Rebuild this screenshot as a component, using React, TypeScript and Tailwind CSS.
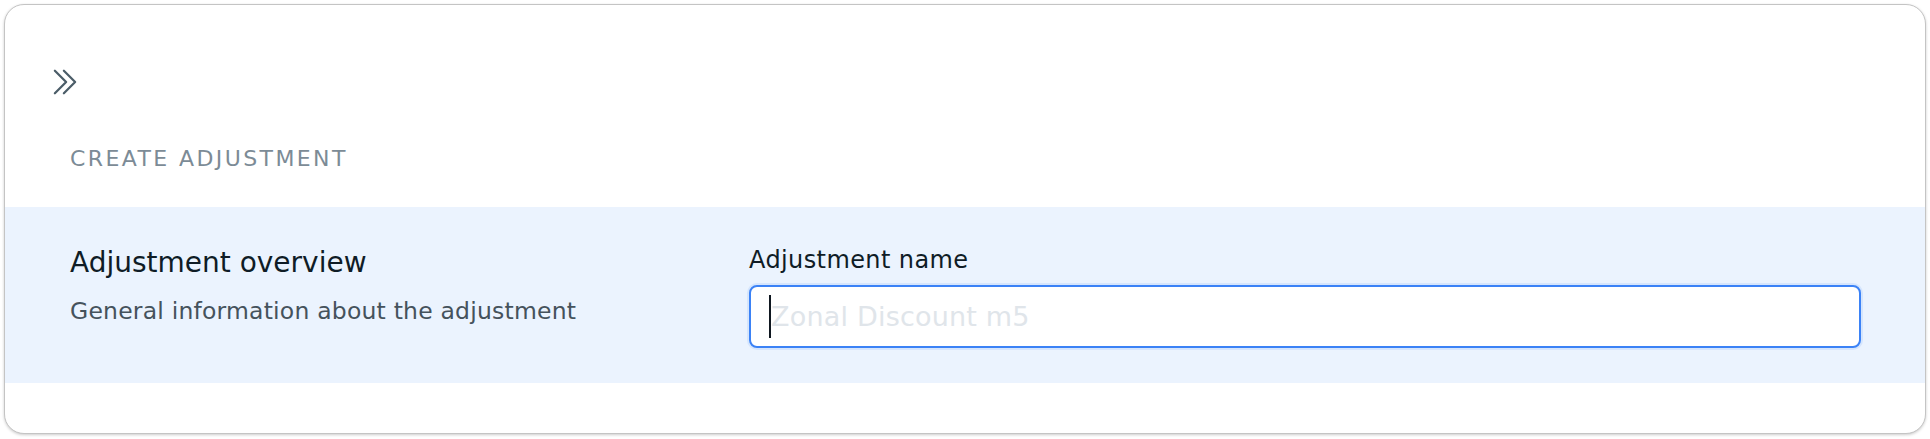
const font = { fontFamily: '"DejaVu Sans", "Liberation Sans", sans-serif' }

function ChevronDoubleRight() {
    return (
        <svg viewBox="0 0 24 24" fill="none" stroke="currentColor" strokeWidth={1.5} className="w-9 h-9 text-[#4b5d68]">
            <path strokeLinecap="round" strokeLinejoin="round" d="m5.25 4.5 7.5 7.5-7.5 7.5m6-15 7.5 7.5-7.5 7.5" />
        </svg>
    )
}

export default function App() {
    return (
        <div className="w-full bg-white p-1" style={font}>
            <div className="rounded-[20px] border border-[#c4c4c4] bg-white shadow-[0_1px_3px_rgba(0,0,0,0.2)] pb-[50px]">
                {/* Header */}
                <div className="pt-[59px] pl-[42px]">
                    <button className="block w-9 h-9">
                        <ChevronDoubleRight />
                    </button>
                </div>
                <h1 className="mt-[46px] pl-[65px] text-[22px] leading-[26px] tracking-[2.4px] text-[#7c8b96] uppercase">
                    Create adjustment
                </h1>

                {/* Overview band */}
                <div className="mt-[35px] h-[176px] bg-[#ebf3fe] pl-[65px] pr-[64px] pt-[39px] flex">
                    <div className="w-[679px] shrink-0">
                        <h2 className="text-[28px] leading-[34px] text-[#0f1c26]">Adjustment overview</h2>
                        <p className="mt-[16px] text-[23.5px] leading-[30px] tracking-[0.2px] text-[#45525c]">
                            General information about the adjustment
                        </p>
                    </div>
                    <div className="flex-1">
                        <label className="block text-[24px] leading-[28px] tracking-[0.4px] text-[#0f1c26]">Adjustment name</label>
                        <div className="mt-[11px] h-[63px] rounded-[8px] border-2 border-[#3b82f6] bg-white shadow-[0_0_0_2px_rgba(59,130,246,0.12)] pl-[18px] flex items-center">
                            <span className="w-[2px] h-[43px] bg-[#0f1720] shrink-0" />
                            <span className="text-[27px] leading-[32px] tracking-[0.2px] text-[#e0e5ea]">Zonal Discount m5</span>
                        </div>
                    </div>
                </div>
            </div>
        </div>
    )
}
